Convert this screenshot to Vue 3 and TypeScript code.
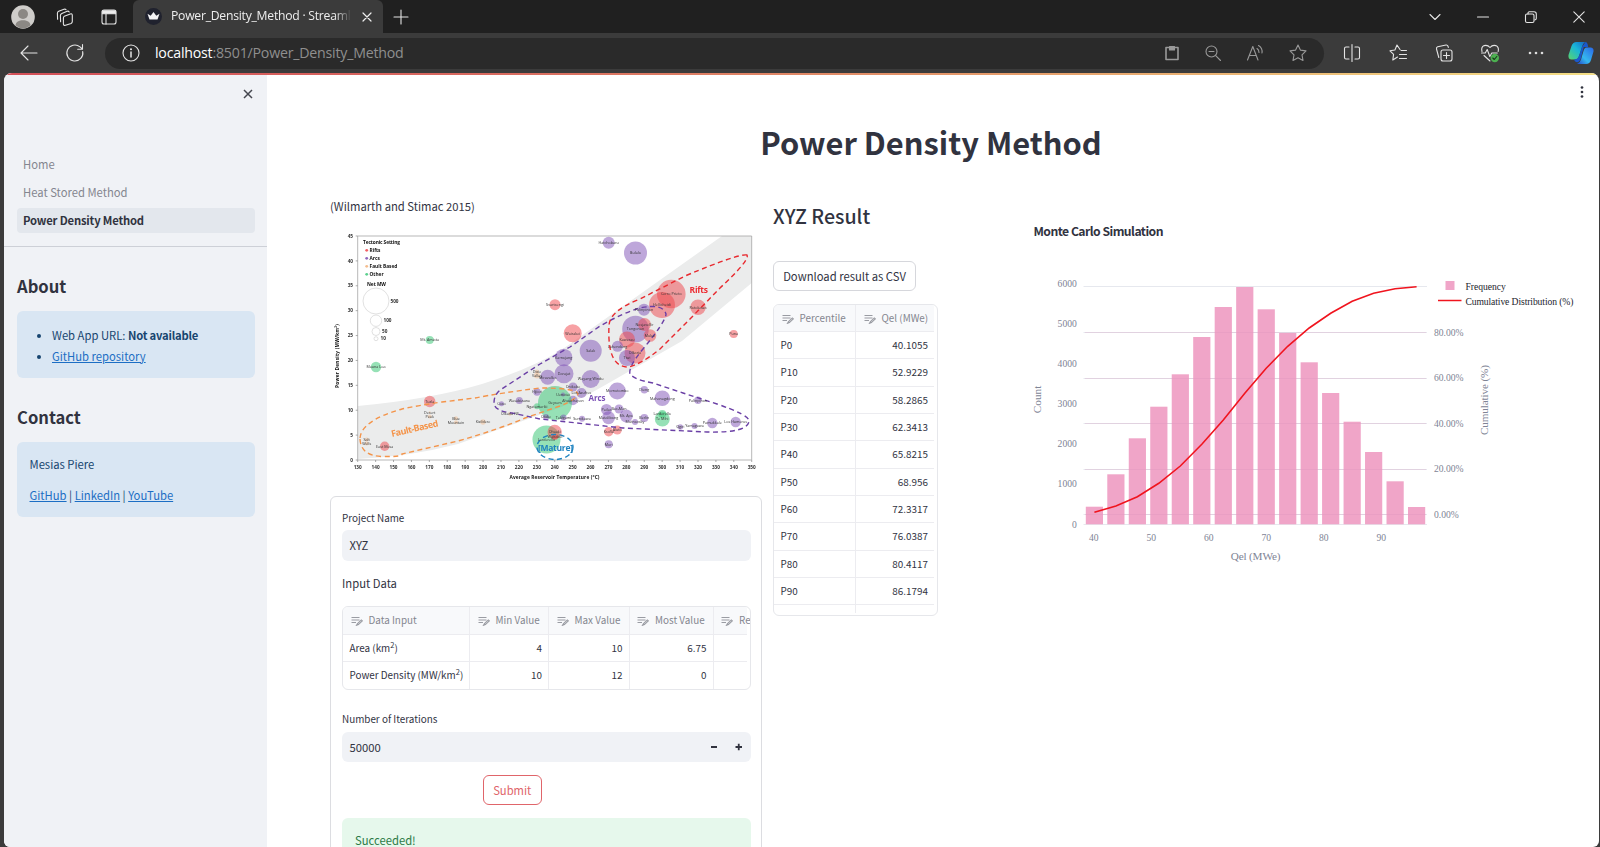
<script setup lang="ts">
interface Bubble { x: number; y: number; r: number; k: 'rift' | 'arc' | 'fault' | 'other'; t: string }

const nav = ['Home', 'Heat Stored Method', 'Power Density Method']
const inputHead = ['Data Input', 'Min Value', 'Max Value', 'Most Value', 'Re']
const inputRows = [
  { name: 'Area (km', vals: ['4', '10', '6.75', ''] },
  { name: 'Power Density (MW/km', vals: ['10', '12', '0', ''] },
]
const results: [string, string][] = [
  ['P0', '40.1055'], ['P10', '52.9229'], ['P20', '58.2865'], ['P30', '62.3413'], ['P40', '65.8215'],
  ['P50', '68.956'], ['P60', '72.3317'], ['P70', '76.0387'], ['P80', '80.4117'], ['P90', '86.1794'],
]

const bubbles: Bubble[] = [
  { x: 608.7, y: 241.7, r: 6, k: 'arc', t: 'Hatchobaru' },
  { x: 635.5, y: 252, r: 11.5, k: 'arc', t: 'Bulalo' },
  { x: 555, y: 303.7, r: 5.5, k: 'rift', t: 'Svartsengi' },
  { x: 572.7, y: 332.3, r: 9, k: 'rift', t: 'Wairakei' },
  { x: 733.7, y: 333, r: 4, k: 'rift', t: 'Puna' },
  { x: 698, y: 306.3, r: 7.7, k: 'rift', t: 'Rotokawa' },
  { x: 671.3, y: 293, r: 14.3, k: 'rift', t: 'Cerro Prieto' },
  { x: 662, y: 304, r: 13, k: 'rift', t: 'Hellisheidi' },
  { x: 644, y: 308.7, r: 6, k: 'arc', t: 'Palinpinon' },
  { x: 635.5, y: 328, r: 13.3, k: 'arc', t: 'Tongonan' },
  { x: 644.5, y: 323.5, r: 6.5, k: 'rift', t: 'Nesjavellir' },
  { x: 650, y: 334.5, r: 6.3, k: 'rift', t: 'Mokai' },
  { x: 627, y: 338.5, r: 8, k: 'rift', t: 'Kawerau' },
  { x: 617.5, y: 345.3, r: 5.5, k: 'arc', t: 'Lahendong' },
  { x: 635, y: 352, r: 10.5, k: 'rift', t: 'Olkaria' },
  { x: 627, y: 357, r: 8, k: 'arc', t: 'Tiwi' },
  { x: 590.7, y: 349.7, r: 11, k: 'arc', t: 'Salak' },
  { x: 563.7, y: 356.5, r: 8.7, k: 'arc', t: 'Kamojang' },
  { x: 564, y: 372.7, r: 9.5, k: 'arc', t: 'Darajat' },
  { x: 547.7, y: 376.3, r: 7.5, k: 'arc', t: 'Miravalles' },
  { x: 590.7, y: 378, r: 9, k: 'arc', t: 'Wayang Windu' },
  { x: 573, y: 386, r: 4.5, k: 'arc', t: 'Onikobe' },
  { x: 581.5, y: 392, r: 5, k: 'arc', t: 'Los Azufres' },
  { x: 573, y: 399.5, r: 4.7, k: 'arc', t: 'Ahuachapan' },
  { x: 555, y: 402, r: 17, k: 'other', t: 'Geysers' },
  { x: 563, y: 393.5, r: 2, k: 'arc', t: 'Uenotai' },
  { x: 617.3, y: 390, r: 8.5, k: 'arc', t: 'Momotombo' },
  { x: 644.3, y: 388.7, r: 3.7, k: 'arc', t: 'Dieng' },
  { x: 662.3, y: 397.3, r: 7.8, k: 'arc', t: 'Mahanagdong' },
  { x: 698, y: 399.3, r: 3.7, k: 'arc', t: 'Palinpinon' },
  { x: 606.5, y: 408.5, r: 5.5, k: 'arc', t: 'Pailas' },
  { x: 619, y: 408, r: 4.5, k: 'arc', t: 'Bac-Man' },
  { x: 608.5, y: 416.7, r: 6.5, k: 'arc', t: 'Matalibong' },
  { x: 626.3, y: 415, r: 6.5, k: 'arc', t: 'Mt. Apo' },
  { x: 635, y: 421, r: 3, k: 'arc', t: 'Mutnovsky' },
  { x: 644.3, y: 417, r: 4, k: 'arc', t: 'Berlin' },
  { x: 662.3, y: 418, r: 7.5, k: 'other', t: 'Te Mihi' },
  { x: 662.3, y: 413, r: 4, k: 'other', t: 'Larderello' },
  { x: 680.3, y: 426, r: 2.8, k: 'arc', t: 'Ogiri' },
  { x: 694.5, y: 425, r: 3, k: 'arc', t: 'Yamagawa' },
  { x: 712.3, y: 422, r: 5.2, k: 'arc', t: 'Pamukkale' },
  { x: 735.7, y: 421, r: 5.2, k: 'arc', t: 'Los Humeros' },
  { x: 546, y: 416, r: 3, k: 'arc', t: 'Otake' },
  { x: 563.5, y: 416.5, r: 3, k: 'arc', t: 'Takigami' },
  { x: 582, y: 417.7, r: 3, k: 'arc', t: 'Sumikawa' },
  { x: 608.7, y: 430.7, r: 4.7, k: 'rift', t: 'Krafla' },
  { x: 617.3, y: 429, r: 4.5, k: 'rift', t: 'Aluto' },
  { x: 608.7, y: 443.3, r: 4, k: 'arc', t: 'Mori' },
  { x: 546.5, y: 438.5, r: 14, k: 'other', t: 'Larderello' },
  { x: 554.7, y: 431, r: 7.2, k: 'rift', t: 'Ohaaki' },
  { x: 555, y: 436, r: 3, k: 'rift', t: 'Wairakei' },
  { x: 429.7, y: 339, r: 4, k: 'other', t: 'Mt. Amiata' },
  { x: 376, y: 366, r: 5.2, k: 'other', t: 'Mauna Loa' },
  { x: 429.7, y: 400.5, r: 5.7, k: 'rift', t: 'Tuzla' },
  { x: 384.7, y: 445.3, r: 4.7, k: 'rift', t: 'East Mesa' },
  { x: 537, y: 370.5, r: 2, k: 'fault', t: 'Dixie' },
  { x: 537, y: 374.5, r: 3, k: 'fault', t: 'Valley' },
  { x: 537, y: 391, r: 3.7, k: 'arc', t: 'Hijiori' },
  { x: 519.3, y: 399.5, r: 3.5, k: 'arc', t: 'Wasabizawa' },
  { x: 501.5, y: 402.7, r: 2.5, k: 'arc', t: 'Coso' },
  { x: 510, y: 412.7, r: 2, k: 'fault', t: 'Olkaria NE' },
  { x: 537, y: 405.3, r: 3, k: 'other', t: 'Ngatamariki' },
  { x: 483, y: 421, r: 2.7, k: 'fault', t: 'Kizildere' },
  { x: 456, y: 417.3, r: 2, k: 'fault', t: 'Blue' },
  { x: 456, y: 421.3, r: 2, k: 'fault', t: 'Mountain' },
  { x: 429.7, y: 411.3, r: 1, k: 'fault', t: 'Desert' },
  { x: 429.7, y: 415.5, r: 2, k: 'fault', t: 'Peak' },
  { x: 366.7, y: 438.5, r: 2, k: 'fault', t: 'Salt' },
  { x: 366.7, y: 442.5, r: 2, k: 'fault', t: 'Wells' },
]
const temps = Array.from({ length: 23 }, (_, i) => ({ v: 130 + i * 10, x: 357.7 + i * 17.91 }))
const dens = Array.from({ length: 10 }, (_, i) => ({ v: i * 5, y: 459 - i * 24.89 }))
const tectonic = [
  { t: 'Rifts', k: 'rift', y: 249.3 }, { t: 'Arcs', k: 'arc', y: 257.3 },
  { t: 'Fault Based', k: 'fault', y: 265.3 }, { t: 'Other', k: 'other', y: 273.3 },
]
const netMw = [
  { t: '500', y: 300, r: 13, x: 390.5 }, { t: '100', y: 319.7, r: 5.7, x: 383.5 },
  { t: '50', y: 330.5, r: 4, x: 382 }, { t: '10', y: 337.7, r: 2, x: 380.5 },
]

const barTops = [506.7, 474.3, 438.3, 406.7, 374.3, 337, 307, 287, 309.3, 333, 362.3, 393, 421.7, 452, 481.3, 507]
const bars = barTops.map((y, i) => ({ x: 1085.8 + i * 21.48, y, h: 524.3 - y }))
const curveY = [512.3, 506, 496.7, 483.3, 466, 444.3, 420, 393.3, 368.3, 346.3, 328, 313.3, 301.3, 293.3, 288.7, 286.8]
const curve = curveY.map((y, i) => `${(1094.4 + i * 21.48).toFixed(1)},${y}`).join(' ')
const counts = [0, 1, 2, 3, 4, 5, 6].map(n => ({ v: n * 1000, y: 524.8 - n * 40.15 }))
const percents = [0, 20, 40, 60, 80].map(n => ({ v: n.toFixed(2) + '%', y: 514.3 - n * 2.275 }))
const xTicks = [40, 50, 60, 70, 80, 90].map((v, i) => ({ v, x: 1093.7 + i * 57.5 }))
</script>

<template>
  <div class="window">
    <header class="tabs">
      <svg class="ic avatar" width="24" height="24" viewBox="0 0 24 24"><circle cx="12" cy="12" r="11.8" fill="#cfcdca" stroke="none" /><circle cx="12" cy="9" r="5" fill="#8b8884" stroke="none" /><path d="M4.500 20.500c0-7 15-7 15 0a11.800 11.800 0 0 1-15 0z" fill="#8b8884" stroke="none" /></svg>
      <svg class="ic spaces" width="20" height="20" viewBox="0 0 20 20"><path d="M9.300 9.200l6-2.300q1.900-.6 2 1.300v6.300q0 1.400-1.200 1.900l-5.600 1.900q-2 .5-2.100-1.300v-6q0-1.300.9-1.800zM5.600 14.800l-.2-6.300Q5.400 7 6.800 6.400l5.400-2.200q1.300-.4 2 .8M2.600 12.300l-.2-6Q2.400 4.900 3.700 4.300L9 2.200q1.300-.4 2 .5" /></svg>
      <svg class="ic panel" width="18" height="18" viewBox="0 0 18 18"><rect x="2" y="2" width="14" height="14" rx="2" /><path d="M2.500 2.800h13v3h-13z" fill="#eee" /><path d="M6 6v10" /></svg>
      <div class="tab">
        <svg width="17" height="17" viewBox="0 0 17 17"><circle cx="8.500" cy="8.500" r="8.500" fill="#20222e" /><path d="M2.500 5.700l3.200 2 2.800-3.700 2.800 3.700 3.200-2-2 5.800H4.500z" fill="#f4f4f6" /></svg>
        <span class="tab-title">Power_Density_Method · Streaml</span>
        <svg class="line" width="12" height="12" viewBox="0 0 12 12"><path d="M2 2l8 8M10 2l-8 8" /></svg>
      </div>
      <svg class="ic plus" width="16" height="16" viewBox="0 0 16 16"><path d="M8 1v14M1 8h14" /></svg>
      <div class="win-btns">
        <svg class="ic" width="14" height="14" viewBox="0 0 14 14"><path d="M2 4.500l5 5 5-5" /></svg>
        <svg class="ic" width="14" height="14" viewBox="0 0 14 14"><path d="M1.500 7h11" /></svg>
        <svg class="ic" width="14" height="14" viewBox="0 0 14 14"><rect x="1.500" y="4" width="8.500" height="8.500" rx="1.500" /><path d="M4 4V2.800Q4.200 1.800 5.200 1.700H10q2.300 0 2.300 2.300v4.500q0 1.200-1.500 1.500" /></svg>
        <svg class="ic" width="14" height="14" viewBox="0 0 14 14"><path d="M1.800 1.800l10.400 10.400M12.200 1.800L1.800 12.200" /></svg>
      </div>
    </header>

    <div class="toolbar">
      <svg class="ic back" width="20" height="20" viewBox="0 0 20 20"><path d="M18 10H2M9 3l-7 7 7 7" /></svg>
      <svg class="ic reload" width="20" height="20" viewBox="0 0 20 20"><path d="M17.700 8.500A8 8 0 1 1 15 3.900L17 5.700M17.500 1.500v4.700h-4.800" /></svg>
      <div class="address">
        <svg class="ic info" width="20" height="20" viewBox="0 0 20 20"><circle cx="10" cy="10" r="8" /><path d="M10 9v5" stroke-width="1.500" /><circle cx="10" cy="6.300" r=".5" /></svg>
        <span class="url"><b>localhost</b>:8501/Power_Density_Method</span>
        <div class="addr-icons">
          <svg class="ic dim" width="18" height="18" viewBox="0 0 18 18"><path d="M6 3.500H3v12h12v-12h-3" stroke-width="1.600" /><path d="M6.500 2.500h5v3.500h-5z" fill="#999" /></svg>
          <svg class="ic dim" width="18" height="18" viewBox="0 0 18 18"><circle cx="7.500" cy="7.500" r="5.500" /><path d="M11.700 11.700L16.500 16.500M5 7.500h5" /></svg>
          <svg class="ic dim" width="20" height="18" viewBox="0 0 20 18"><path d="M2.500 16L7.800 2.500 13 16M4.300 11.500h7M12 4.500q2 1.300 2 4M13.500 1.500q4.300 2.700 3.500 7.500" /></svg>
          <svg class="ic dim" width="20" height="20" viewBox="0 0 20 20"><path d="M10 2l2.400 5.100 5.600.8-4 3.900 1 5.600-5-2.700-5 2.700 1-5.600-4-3.900 5.600-.8z" /></svg>
        </div>
      </div>
      <div class="tools">
        <svg class="ic" width="20" height="20" viewBox="0 0 20 20"><path d="M7 4H4Q2.500 4 2.500 5.500v9Q2.500 16 4 16h3M13 4h3q1.500 0 1.500 1.500v9q0 1.500-1.500 1.500h-3M10 1.500v17" /></svg>
        <svg class="ic" width="20" height="20" viewBox="0 0 20 20"><path d="M12 6.500L9 2 6.900 7 2 7.800l3.600 3.600-.8 5.600L9.500 14M13 7.500h5.500M11.500 11.500h7M11.500 15.500h7" /></svg>
        <svg class="ic" width="20" height="20" viewBox="0 0 20 20"><rect x="7" y="7" width="11" height="11" rx="2" /><path d="M12.500 9.500v6M9.500 12.500h6M4.800 14.500L2.500 6q-.3-1.600 1.200-2.200L12 2q1.500-.2 2 1.200l.3 1.300" /></svg>
        <svg class="ic" width="20" height="20" viewBox="0 0 20 20"><path d="M2 8.500Q.8 4 4.200 2.600 7.500 1.600 10 4.500q2.500-2.900 5.800-1.900 3.400 1.400 2.400 5.900M1.500 10h3.800l1.900-3.500 2.600 7 2-3.500h5.500M4 12.500l6 5.500" /><circle cx="14.800" cy="15" r="4.200" fill="#4caf50" stroke="none" /><path d="M12.800 15l1.500 1.500 2.500-3" stroke="#17381a" /></svg>
        <svg class="ic" width="20" height="20" viewBox="0 0 20 20"><g fill="#ddd" stroke="none"><circle cx="4" cy="10" r="1.300" /><circle cx="10" cy="10" r="1.300" /><circle cx="16" cy="10" r="1.300" /></g></svg>
      </div>
      <svg class="copilot" width="26" height="24" viewBox="0 0 26 24">
        <defs>
          <linearGradient id="cpa" x1="1" y1="0" x2="0" y2="1"><stop offset="0" stop-color="#1466c8" /><stop offset=".45" stop-color="#19b5d8" /><stop offset="1" stop-color="#58d66e" /></linearGradient>
          <linearGradient id="cpb" x1="1" y1="0" x2="0" y2="1"><stop offset="0" stop-color="#2a66e8" /><stop offset=".6" stop-color="#35b8ee" /><stop offset="1" stop-color="#2447c8" /></linearGradient>
        </defs>
        <path d="M8.500 1h9Q15 2 14 6l-3 9q-1 3.500-4 3.500H3Q0 18 .5 14l3-9Q5 1 8.500 1z" fill="url(#cpa)" />
        <path d="M17.500 1q2 0 2.700 5h-4.500L13 17q-1.500 5-5 4-1.500-.8-2-2.500 3.500 0 5-3.500l3-9z" fill="#1a58cc" />
        <path d="M18.500 6.500H23Q26 7 25.500 10.500l-2.500 8.500q-1.200 4-5 4H9q3-1 4-4.500l2.500-8.500q.8-3.500 3-3.500z" fill="url(#cpb)" />
      </svg>
    </div>

    <div class="page">
      <aside class="sidebar">
        <svg class="close" width="12" height="12" viewBox="0 0 12 12"><path d="M2 2l8 8M10 2l-8 8" /></svg>
        <nav>
          <a v-for="(n, i) in nav" :key="n" :class="{ active: i === 2 }">{{ n }}</a>
        </nav>
        <hr>
        <h2>About</h2>
        <div class="info-box about">
          <ul>
            <li>Web App URL: <b>Not available</b></li>
            <li><a class="link">GitHub repository</a></li>
          </ul>
        </div>
        <h2>Contact</h2>
        <div class="info-box contact">
          <p>Mesias Piere</p>
          <p><a class="link">GitHub</a> | <a class="link">LinkedIn</a> | <a class="link">YouTube</a></p>
        </div>
      </aside>

      <main>
        <div class="menu"><svg width="6" height="14" viewBox="0 0 6 14"><circle cx="3" cy="2.500" r="1.350" /><circle cx="3" cy="7" r="1.350" /><circle cx="3" cy="11.500" r="1.350" /></svg></div>
        <h1>Power Density Method</h1>
        <div class="columns">
          <section class="col-a">
            <p class="caption">(Wilmarth and Stimac 2015)</p>
            <svg class="scatter" width="432" height="263" viewBox="330 224 432 263">
              <path d="M357.700 405Q432 398 482 383Q525 370 560 350L722 235H751.700V282L682 340L607 383Q575 402 545 412L458 443Q408 456 357.700 458z" fill="#ebecec" />
              <path d="M357.700 459V235H751.700V459z" fill="none" stroke="#a5a5a5" stroke-width=".8" />
              <g stroke="#888" stroke-width=".7">
                <path v-for="d in temps" :key="'x' + d.v" :d="`M${d.x} 459v2`" />
                <path v-for="d in dens" :key="'y' + d.v" :d="`M355.700 ${d.y}h2`" />
              </g>
              <g class="axis">
                <text v-for="d in temps" :key="d.v" :x="d.x" y="467.500" text-anchor="middle">{{ d.v }}</text>
                <text v-for="d in dens" :key="d.v" :x="353" :y="d.y + 1.700" text-anchor="end">{{ d.v }}</text>
                <text class="em" x="554.500" y="477.600" text-anchor="middle" textLength="90">Average Reservoir Temperature (°C)</text>
                <text class="em" transform="translate(339 355) rotate(-90)" text-anchor="middle" textLength="64">Power Density (MW/km²)</text>
                <text class="em" x="363" y="242.500" textLength="37">Tectonic Setting</text>
                <text class="em" x="367" y="284.700" textLength="19">Net MW</text>
              </g>
              <g v-for="d in tectonic" :key="d.t" class="axis">
                <circle :class="d.k" class="key" cx="366.700" :cy="d.y" r="1.400" />
                <text class="em" x="369.500" :y="d.y + 1.700">{{ d.t }}</text>
              </g>
              <g v-for="d in netMw" :key="d.t" class="axis">
                <circle cx="376" :cy="d.y" :r="d.r" fill="none" stroke="#ccc" stroke-width=".6" />
                <text :x="d.x" :y="d.y + 1.700">{{ d.t }}</text>
              </g>
              <circle v-for="(b, i) in bubbles" :key="i" :class="b.k" :cx="b.x" :cy="b.y" :r="b.r" />
              <g class="dash">
                <path stroke="#f4944a" d="M360 438Q361 455 382 455.500T402 453L458 440Q500 428 525 417L560 405Q577 398 578 393Q577 387 540 387Q500 392 475 397L442 401Q415 405 402 408Q360 420 360 438z" />
                <path stroke="#6a3fa5" d="M494 401.700Q494 393 501.700 388L540 363L570 346L600 325Q625 311 640 307Q663 302 666 313Q666 320 643 348Q628 366 630 373Q635 379 653 382L683 392L717 403Q749 414 749 420Q748 432 707 431L623 427L540 418L512 412Q494 410 494 401.700z" />
                <path stroke="#e8292e" d="M747 254Q740 252 685 275L640 298Q609 310 609 325Q607 366 628 366Q640 364 660 348L690 318L720 287Q750 259 747 254z" />
                <ellipse stroke="#1f83c0" cx="555" cy="446" rx="18" ry="12.500" />
              </g>
              <g class="points">
                <text v-for="(b, i) in bubbles" :key="i" :x="b.x" :y="b.y + 1.200" text-anchor="middle">{{ b.t }}</text>
              </g>
              <g class="zones">
                <text fill="#f4944a" transform="translate(392 436) rotate(-13)" textLength="48" font-size="9">Fault-Based</text>
                <text fill="#7a4fb5" x="588.500" y="400" textLength="17" font-size="8">Arcs</text>
                <text fill="#ee2a30" x="689.500" y="292" textLength="18.500" font-size="8.500">Rifts</text>
                <text fill="#1f83c0" x="538" y="450" textLength="35" font-size="8.500">[Mature]</text>
              </g>
            </svg>

            <form class="form" @submit.prevent>
              <label>Project Name</label>
              <div class="field">XYZ</div>
              <p class="sub">Input Data</p>
              <div class="grid-frame input-grid">
                <div class="row head">
                  <span v-for="h in inputHead" :key="h"><svg class="col-ic" width="12" height="10" viewBox="0 0 12 10"><path d="M.5 1.500h8M.5 4h8M.5 6.500h4.500M5.500 9.300l1-1.800 3.800-3.600 1 1-3.900 3.700z" /></svg>{{ h }}</span>
                </div>
                <div v-for="r in inputRows" :key="r.name" class="row">
                  <span>{{ r.name }}<sup>2</sup>)</span><span v-for="(v, i) in r.vals" :key="i" class="num">{{ v }}</span>
                </div>
              </div>
              <label class="iter">Number of Iterations</label>
              <div class="field number">50000<svg width="38" height="10" viewBox="0 0 38 10"><path d="M2 5h6M26.500 5h6.500M29.750 1.750v6.500" /></svg></div>
              <button class="submit">Submit</button>
              <div class="success">Succeeded!</div>
            </form>
          </section>

          <section class="col-b">
            <h3>XYZ Result</h3>
            <button class="download">Download result as CSV</button>
            <div class="grid-frame result-grid">
              <div class="row head">
                <span v-for="h in ['Percentile', 'Qel (MWe)']" :key="h"><svg class="col-ic" width="12" height="10" viewBox="0 0 12 10"><path d="M.5 1.500h8M.5 4h8M.5 6.500h4.500M5.500 9.300l1-1.800 3.800-3.600 1 1-3.900 3.700z" /></svg>{{ h }}</span>
              </div>
              <div v-for="r in results" :key="r[0]" class="row"><span>{{ r[0] }}</span><span class="num">{{ r[1] }}</span></div>
              <div class="row rest"><span /><span /></div>
            </div>
          </section>

          <section class="col-c">
            <svg class="histogram" width="560" height="360" viewBox="1030 210 560 360">
              <text class="title" x="1033.500" y="235.500" textLength="130">Monte Carlo Simulation</text>
              <g stroke="#e6e8ee" stroke-width="1">
                <path d="M1083.500 286.500H1427M1083.500 524.500H1427" />
                <path v-for="p in percents" :key="p.v" :d="`M1083.500 ${Math.round(p.y) + .5}H1427`" />
              </g>
              <rect v-for="b in bars" :key="b.x" :x="b.x" :y="b.y" width="17.200" :height="b.h" fill="#f0a5c8" />
              <g stroke="#d48fb8" stroke-opacity=".25">
                <path v-for="p in percents" :key="p.v" :d="`M1085 ${Math.round(p.y) + .5}H1426`" />
              </g>
              <polyline :points="curve" fill="none" stroke="#f0141e" stroke-width="1.600" />
              <g class="ticks">
                <text v-for="c in counts" :key="c.v" x="1076.800" :y="c.y + 2.700" text-anchor="end">{{ c.v }}</text>
                <text v-for="p in percents" :key="p.v" x="1434" :y="p.y + 3.200">{{ p.v }}</text>
                <text v-for="t in xTicks" :key="t.v" :x="t.x" y="541" text-anchor="middle">{{ t.v }}</text>
              </g>
              <g class="names" text-anchor="middle">
                <text x="1255.600" y="559.500" textLength="49.600">Qel (MWe)</text>
                <text transform="translate(1040.500 399.500) rotate(-90)" textLength="27.500">Count</text>
                <text transform="translate(1488 400) rotate(-90)" textLength="70">Cumulative (%)</text>
              </g>
              <rect x="1445.500" y="281" width="9" height="9" fill="#f0a5c8" />
              <path d="M1438 300.500h23.500" stroke="#f0141e" stroke-width="1.500" />
              <g class="legend"><text x="1465.400" y="290">Frequency</text><text x="1465.400" y="305" textLength="108">Cumulative Distribution (%)</text></g>
            </svg>
          </section>
        </div>
      </main>
    </div>
  </div>
</template>

<style>
html, body { margin: 0; overflow: hidden; background: #3b3b3b; }
</style>

<style scoped>
* { box-sizing: border-box; }
.window { width: 1600px; height: 847px; overflow: hidden; display: flex; flex-direction: column; background: #3b3b3b; font-family: "Noto Sans CJK SC", "Noto Sans", sans-serif; font-size: 11.250px; line-height: 1.6; color: #31333f; }
svg { flex: none; display: block; }
b { letter-spacing: -.2px; }
.ic, .line { fill: none; stroke: #e4e4e4; stroke-width: 1.1; stroke-linecap: round; stroke-linejoin: round; }
.line { stroke: #eee; stroke-width: 1.2; }
.dim { stroke: #999; }

.tabs { height: 33px; flex: none; display: flex; align-items: center; background: #202020; padding-left: 11px; }
.spaces { margin-left: 20px; }
.panel { margin-left: 25px; margin-right: 15px; }
.tab { width: 250px; height: 33px; padding: 0 10px 0 12px; display: flex; align-items: center; background: #3b3b3b; border-radius: 6px 6px 0 0; }
.tab-title { flex: 1; margin: 0 4px 2px 9px; white-space: nowrap; font: 12.2px/18px "Open Sans", "Noto Sans", sans-serif; letter-spacing: -.25px; color: #eee; -webkit-mask-image: linear-gradient(90deg, #000 88%, transparent 97%); mask-image: linear-gradient(90deg, #000 88%, transparent 97%); }
.plus { margin-left: 10px; }
.win-btns { margin-left: auto; margin-right: 14px; display: flex; gap: 34px; }

.toolbar { height: 40px; flex: none; display: flex; align-items: center; padding-left: 19px; }
.reload { margin-left: 26px; margin-right: 20px; }
.address { width: 1219px; height: 31px; display: flex; align-items: center; padding: 0 16px 0 16px; background: #2a2a2a; border-radius: 16px; }
.url { margin-left: 14px; margin-bottom: 1px; font: 14.2px/22px "Open Sans", "Noto Sans", sans-serif; letter-spacing: -.22px; color: #8f8f8f; }
.url b { font-weight: 400; letter-spacing: inherit; color: #fff; }
.addr-icons { margin-left: auto; display: flex; align-items: center; gap: 23px; }
.tools { margin-left: 18px; display: flex; gap: 26px; }
.copilot { margin-left: 22px; }

.page { position: relative; width: 1594.500px; height: 774px; margin-left: 4px; display: flex; overflow: hidden; border-radius: 8px 8px 6px 6px; background: #fff; }
.page::before { content: ""; position: absolute; inset: 0 0 auto; height: 2px; z-index: 1; background: linear-gradient(90deg, #d35058, #d8695f 30%, #e6a06c 65%, #f4df86); }

.sidebar { width: 263px; height: 774px; flex: none; padding: 0 12.500px 0 13px; background: #f0f2f6; }
.close { margin: 15px .8px 0 auto; fill: none; stroke: #45474f; stroke-width: 1.500; }
.sidebar nav { margin-top: 52px; display: flex; flex-direction: column; gap: 3px; }
.sidebar nav a { height: 25px; padding-left: 6px; line-height: 25px; border-radius: 4px; color: #84868f; }
.sidebar nav a.active { background: #e3e7ed; color: #31333f; font-weight: 700; letter-spacing: -.18px; }
hr { height: 1px; margin: 13.400px -12.500px 0 -13px; border: 0; background: #cdd0d7; }
h2 { margin: 25px 0 9.300px; font-size: 16.600px; line-height: 29px; font-weight: 600; }
.info-box { border-radius: 6px; background: #d9e6f3; color: #17456f; padding: 0 12.500px; }
.about { height: 67px; padding-top: 14px; }
.about ul { margin: 0; padding-left: 22.500px; }
.about li { line-height: 21px; }
.about + h2 { margin-bottom: 10px; }
.contact { height: 75px; padding-top: 12px; }
.contact p { margin: 0 0 10.500px; line-height: 20.500px; }
.link { color: #1c6ec4; text-decoration: underline; text-underline-offset: 1px; }

main { flex: 1; min-width: 0; }
.menu { display: flex; justify-content: flex-end; padding: 12px 14px 0 0; fill: #31333f; }
h1 { margin: 20.500px 3.600px 0 0; height: 44px; line-height: 44px; text-align: center; font-size: 30.850px; font-weight: 700; }
.columns { display: grid; grid-template-columns: 432px 185px 560px; padding-left: 63px; margin-top: 22.500px; }
.caption { margin: 10px 0 0; height: 21px; line-height: 21px; }
.scatter { margin-top: 7.600px; margin-bottom: 8.400px; filter: blur(.25px); }
.axis text { font: 700 4.700px "Open Sans", sans-serif; fill: #333; }
.axis .em { font-size: 4.800px; fill: #111; }
.axis .key { fill-opacity: .85; }
.points text { font: 3.700px "Open Sans", sans-serif; fill: #333; }
.zones text { font-family: "Open Sans", sans-serif; font-weight: 700; }
.dash { fill: none; stroke-width: 1.400; stroke-dasharray: 5 3.500; }
.rift { fill: #f0444a; fill-opacity: .5; }
.arc { fill: #7d4fb5; fill-opacity: .5; }
.fault { fill: #f2b27a; fill-opacity: .4; }
.other { fill: #3fc87a; fill-opacity: .55; }

.form { height: 400px; padding: 12px 10.500px 0 11px; border: 1px solid #dcdde1; border-radius: 6px; display: flex; flex-direction: column; }
label { height: 18px; line-height: 18px; font-size: 9.900px; }
.field { height: 31px; flex: none; margin-top: 3.500px; padding-left: 7.500px; line-height: 31px; border-radius: 6px; background: #f0f2f6; }
.sub { margin: 12px 0 0; height: 20px; line-height: 20px; }
.grid-frame { overflow: hidden; border: 1px solid #e6e7eb; border-radius: 6px; font-size: 9.900px; }
.row { display: grid; height: 27.350px; line-height: 27px; border-bottom: 1px solid #ececf0; }
.row > span { padding: 0 6px 0 6.500px; border-right: 1px solid #ececf0; white-space: nowrap; }
.row > span:last-child { border-right: 0; }
.row .num { text-align: right; }
.head { height: 28px; background: #f8f9fb; color: #84868f; }
.head > span { display: flex; align-items: center; }
.col-ic { margin: 1px 6px 0 1px; fill: none; stroke: #9a9ca3; stroke-width: 1.100; }
.input-grid { margin-top: 12.500px; height: 84px; flex: none; }
.input-grid .row { grid-template-columns: 127px 79px 80.500px 84px 33px; width: 403.500px; }
.input-grid .row:last-child { border-bottom: 0; height: 24px; }
.input-grid sup { font-size: 7.500px; line-height: 0; vertical-align: 4px; }
.iter { margin-top: 20px; }
.number { height: 30px; margin-top: 4px; line-height: 30px; display: flex; align-items: center; justify-content: space-between; padding-right: 2px; }
.number svg { fill: none; stroke: #31333f; stroke-width: 1.800; margin-right: 2px; }
button { font-family: inherit; font-size: 11.250px; padding: 0; background: #fff; border-radius: 6px; }
.submit { align-self: flex-start; width: 58.500px; height: 30px; flex: none; margin: 13.500px 0 0 141px; border: 1px solid #e0656a; color: #e0656a; line-height: 26px; }
.success { flex: 1; margin-top: 12.500px; padding: 12px 13px; line-height: 20px; border-radius: 6px; background: #e6f8ec; color: #2c7a45; }

.col-b { padding-left: 11px; }
h3 { margin: 13px 0 0; height: 34px; line-height: 34px; font-size: 19.600px; font-weight: 500; }
.download { display: block; width: 143px; height: 30px; margin-top: 28px; border: 1px solid #d6d7dc; color: #31333f; line-height: 26px; }
.result-grid { width: 165px; height: 312.500px; margin-top: 12.500px; }
.result-grid .row { grid-template-columns: 82px 78px; width: 160px; }
.result-grid .head { height: 27.500px; }
.result-grid .rest { height: 8px; border-bottom: 0; }
.col-c { padding-left: 83px; }
.histogram { overflow: visible; margin-top: 24.200px; }
.title { font-size: 12.200px; font-weight: 700; fill: #31333f; }
.ticks text { font: 9.600px "Liberation Serif", serif; fill: #808495; }
.names text { font: 11.200px "Liberation Serif", serif; fill: #808495; }
.legend text { font: 9.600px "Liberation Serif", serif; fill: #22242c; }
</style>
